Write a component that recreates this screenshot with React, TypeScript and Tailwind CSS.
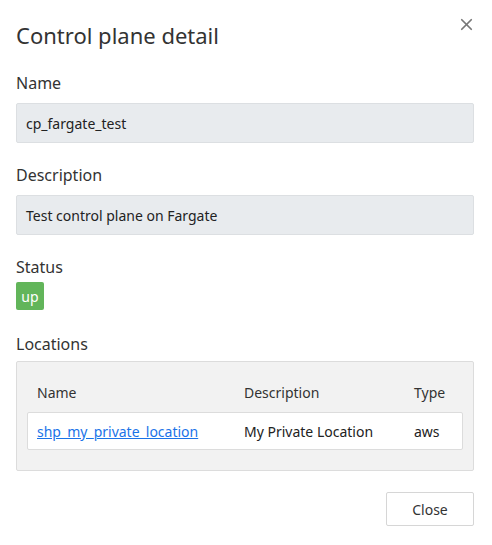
import { X } from 'lucide-react';

const font = { fontFamily: '"Noto Sans", "Open Sans", sans-serif' };

function Field({ label, value }: { label: string; value: string }) {
  return (
    <div className="mb-5">
      <div className="text-[16px] leading-6 text-[#333] mb-2">{label}</div>
      <div className="h-10 flex items-center px-[9px] bg-[#e8ebee] border border-[#dcdfe2] rounded-[2px] text-[14px] text-[#222]">
        {value}
      </div>
    </div>
  );
}

export default function App() {
  return (
    <div className="w-[492px] h-[545px] bg-white relative" style={font}>
      <button className="absolute right-[16px] top-[15px] text-[#777]">
        <X className="w-[19px] h-[19px]" strokeWidth={2.2} />
      </button>
      <div className="pl-4 pr-[18px] pt-[20px]">
        <h2 className="text-[22px] leading-[30px] text-[#333] mb-[21px]">Control plane detail</h2>

        <Field label="Name" value="cp_fargate_test" />
        <Field label="Description" value="Test control plane on Fargate" />

        <div className="mb-[22px]">
          <div className="text-[16px] leading-6 text-[#333] mb-[3px]">Status</div>
          <span className="inline-flex items-center justify-center w-7 h-7 rounded-[2px] bg-[#62b55a] text-white text-[14px]">
            up
          </span>
        </div>

        <div className="text-[16px] leading-6 text-[#333] mb-[5px]">Locations</div>
        <div className="bg-[#f2f2f2] border border-[#dcdcdc] rounded-[2px] px-[10px] pt-[20px] pb-[20px]">
          <div className="flex text-[14px] text-[#333] px-[10px] pb-[9px]">
            <div className="w-[207px]">Name</div>
            <div className="w-[170px]">Description</div>
            <div>Type</div>
          </div>
          <div className="flex items-center h-[38px] bg-white border border-[#dcdcdc] rounded-[2px] px-[9px] text-[14px] text-[#222]">
            <a href="#" className="w-[207px] text-[#1a73e8] underline">shp_my_private_location</a>
            <div className="w-[170px]">My Private Location</div>
            <div>aws</div>
          </div>
        </div>

        <div className="flex justify-end mt-[21px]">
          <button className="w-[88px] h-[34px] bg-white border border-[#d6d6d6] rounded-[2px] text-[14px] text-[#333]">
            Close
          </button>
        </div>
      </div>
    </div>
  );
}
